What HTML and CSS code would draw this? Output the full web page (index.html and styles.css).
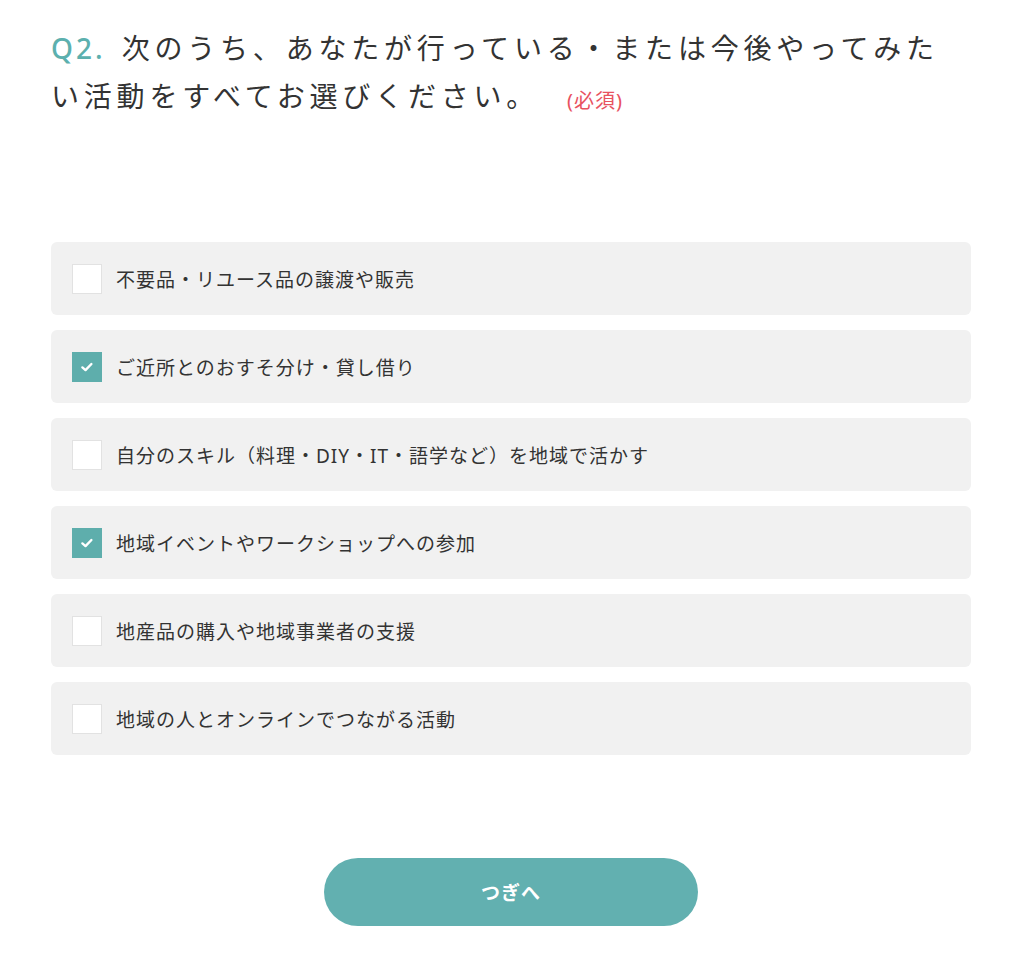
FILE: index.html
```html
<!DOCTYPE html>
<html lang="ja">
<head>
<meta charset="utf-8">
<link rel="stylesheet" href="styles.css">
</head>
<body>
<main class="page">
  <h1 class="question"><span class="qnum">Q2.</span> 次のうち、あなたが行っている・または今後やってみたい活動をすべてお選びください。<span class="required">(必須)</span></h1>
  <ul class="options">
    <li class="option"><span class="box"></span><span class="label">不要品・リユース品の譲渡や販売</span></li>
    <li class="option"><span class="box checked"><svg viewBox="0 0 16 16" width="16" height="16"><path d="M3.4 8.4 L6.5 11.1 L12.4 5" fill="none" stroke="#fff" stroke-width="2.4" stroke-linecap="round" stroke-linejoin="round"/></svg></span><span class="label">ご近所とのおすそ分け・貸し借り</span></li>
    <li class="option"><span class="box"></span><span class="label">自分のスキル（料理・DIY・IT・語学など）を地域で活かす</span></li>
    <li class="option"><span class="box checked"><svg viewBox="0 0 16 16" width="16" height="16"><path d="M3.4 8.4 L6.5 11.1 L12.4 5" fill="none" stroke="#fff" stroke-width="2.4" stroke-linecap="round" stroke-linejoin="round"/></svg></span><span class="label">地域イベントやワークショップへの参加</span></li>
    <li class="option"><span class="box"></span><span class="label">地産品の購入や地域事業者の支援</span></li>
    <li class="option"><span class="box"></span><span class="label">地域の人とオンラインでつながる活動</span></li>
  </ul>
  <div class="actions">
    <button class="next">つぎへ</button>
  </div>
</main>
</body>
</html>
```

FILE: styles.css
```css
html, body {
  margin: 0;
  padding: 0;
  background: #fff;
}
body {
  font-family: "Noto Sans", "Noto Sans CJK JP", sans-serif;
  color: #333;
}
.page {
  width: 920px;
  margin-left: 51px;
  padding-top: 24px;
}
.question {
  margin: 0;
  font-size: 28px;
  font-weight: 400;
  line-height: 48px;
  letter-spacing: 4.8px;
  color: #333;
}
.qnum {
  color: #5cb0ae;
  font-weight: 500;
  letter-spacing: 3px;
  padding-right: 4px;
}
.required {
  margin-left: 28px;
  font-size: 20px;
  line-height: 1;
  letter-spacing: 1px;
  color: #e8525f;
  vertical-align: -1px;
}
.options {
  list-style: none;
  margin: 122px 0 0;
  padding: 0;
  display: flex;
  flex-direction: column;
  gap: 15px;
}
.option {
  height: 73px;
  background: #f1f1f1;
  border-radius: 6px;
  display: flex;
  align-items: center;
  padding-left: 21px;
  box-sizing: border-box;
}
.box {
  width: 30px;
  height: 30px;
  box-sizing: border-box;
  background: #fff;
  border: 1px solid #e2e2e2;
  display: flex;
  align-items: center;
  justify-content: center;
  flex: none;
}
.box.checked {
  background: #5eaeac;
  border-color: #5eaeac;
}
.label {
  margin-left: 14px;
  font-size: 19px;
  letter-spacing: 1px;
  color: #333;
}
.actions {
  display: flex;
  justify-content: center;
  margin-top: 103px;
}
.next {
  width: 374px;
  height: 68px;
  border: none;
  border-radius: 34px;
  background: #62b0b0;
  color: #fff;
  font-family: "Noto Sans", "Noto Sans CJK JP", sans-serif;
  font-size: 19px;
  font-weight: 700;
  letter-spacing: 1px;
}
```
